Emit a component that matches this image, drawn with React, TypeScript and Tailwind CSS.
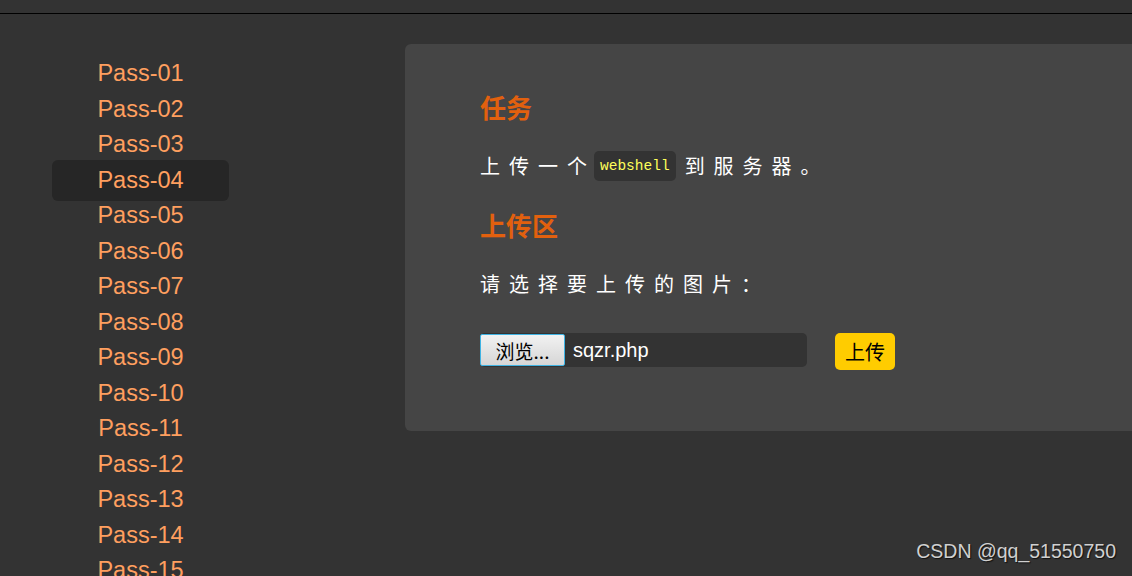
import React from 'react';

const passes = Array.from({ length: 15 }, (_, i) => `Pass-${String(i + 1).padStart(2, '0')}`);

const App: React.FC = () => {
    const active = 'Pass-04';

    return (
        <div className="relative h-[576px] w-[1132px] overflow-hidden bg-[#333333] font-['Liberation_Sans','Noto_Sans_CJK_SC',sans-serif]">
            {/* top bar */}
            <div className="h-[14px] border-b border-black bg-[#333333]" />

            <div className="flex">
                {/* sidebar */}
                <ul className="w-[405px] shrink-0 pl-[52px] pt-[42px]">
                    {passes.map(p => (
                        <li
                            key={p}
                            className={
                                p === active
                                    ? 'my-[-3px] w-[177px] rounded-[6px] bg-[#262626] py-[3px] text-center text-[23.5px] leading-[35.5px] text-[#ff9f5f]'
                                    : 'w-[177px] text-center text-[23.5px] leading-[35.5px] text-[#ff9f5f]'
                            }
                        >
                            {p}
                        </li>
                    ))}
                </ul>

                {/* main panel */}
                <div className="mt-[30px] h-[387px] w-[800px] shrink-0 rounded-[6px] bg-[#454545] pl-[75px] pt-[45px] font-['Noto_Sans_CJK_SC',sans-serif]">
                    <h2 className="text-[26px] font-bold leading-[36px] text-[#e2600e]">任务</h2>
                    <p className="mt-[26px] flex items-center text-[20px] leading-[30px] tracking-[9px] text-white">
                        <span className="-mr-[2px]">上传一个</span>
                        <code className="rounded-[5px] bg-[#333333] px-[6px] font-['Liberation_Mono',monospace] text-[14.5px] font-normal leading-[30px] tracking-normal text-[#ffff5a]">
                            webshell
                        </code>
                        <span className="ml-[9px]">到服务器。</span>
                    </p>

                    <h2 className="mt-[26px] text-[26px] font-bold leading-[36px] text-[#e2600e]">上传区</h2>
                    <p className="mt-[26px] text-[20px] leading-[30px] tracking-[9px] text-white">请选择要上传的图片：</p>

                    <div className="mt-[34px] flex items-start">
                        <div className="flex h-[34px] w-[327px] items-center rounded-[5px] bg-[#333333]">
                            <button className="h-[32px] w-[85px] rounded-[2px] border border-[#3fb3e3] bg-gradient-to-b from-[#f2f2f2] to-[#d6d6d6] text-[19px] leading-none text-black">
                                浏览...
                            </button>
                            <span className="ml-[8px] font-['Liberation_Sans',sans-serif] text-[20px] text-white">sqzr.php</span>
                        </div>
                        <button className="ml-[28px] h-[37px] w-[60px] rounded-[5px] bg-[#ffcc00] text-[20px] leading-none text-black">
                            上传
                        </button>
                    </div>
                </div>
            </div>

            {/* watermark */}
            <div className="absolute bottom-[10px] right-[16px] font-['Liberation_Sans',sans-serif] text-[19.5px] text-[#d0d0d0] [text-shadow:1px_1px_1px_#111]">
                CSDN @qq_51550750
            </div>
        </div>
    );
};

export default App;
